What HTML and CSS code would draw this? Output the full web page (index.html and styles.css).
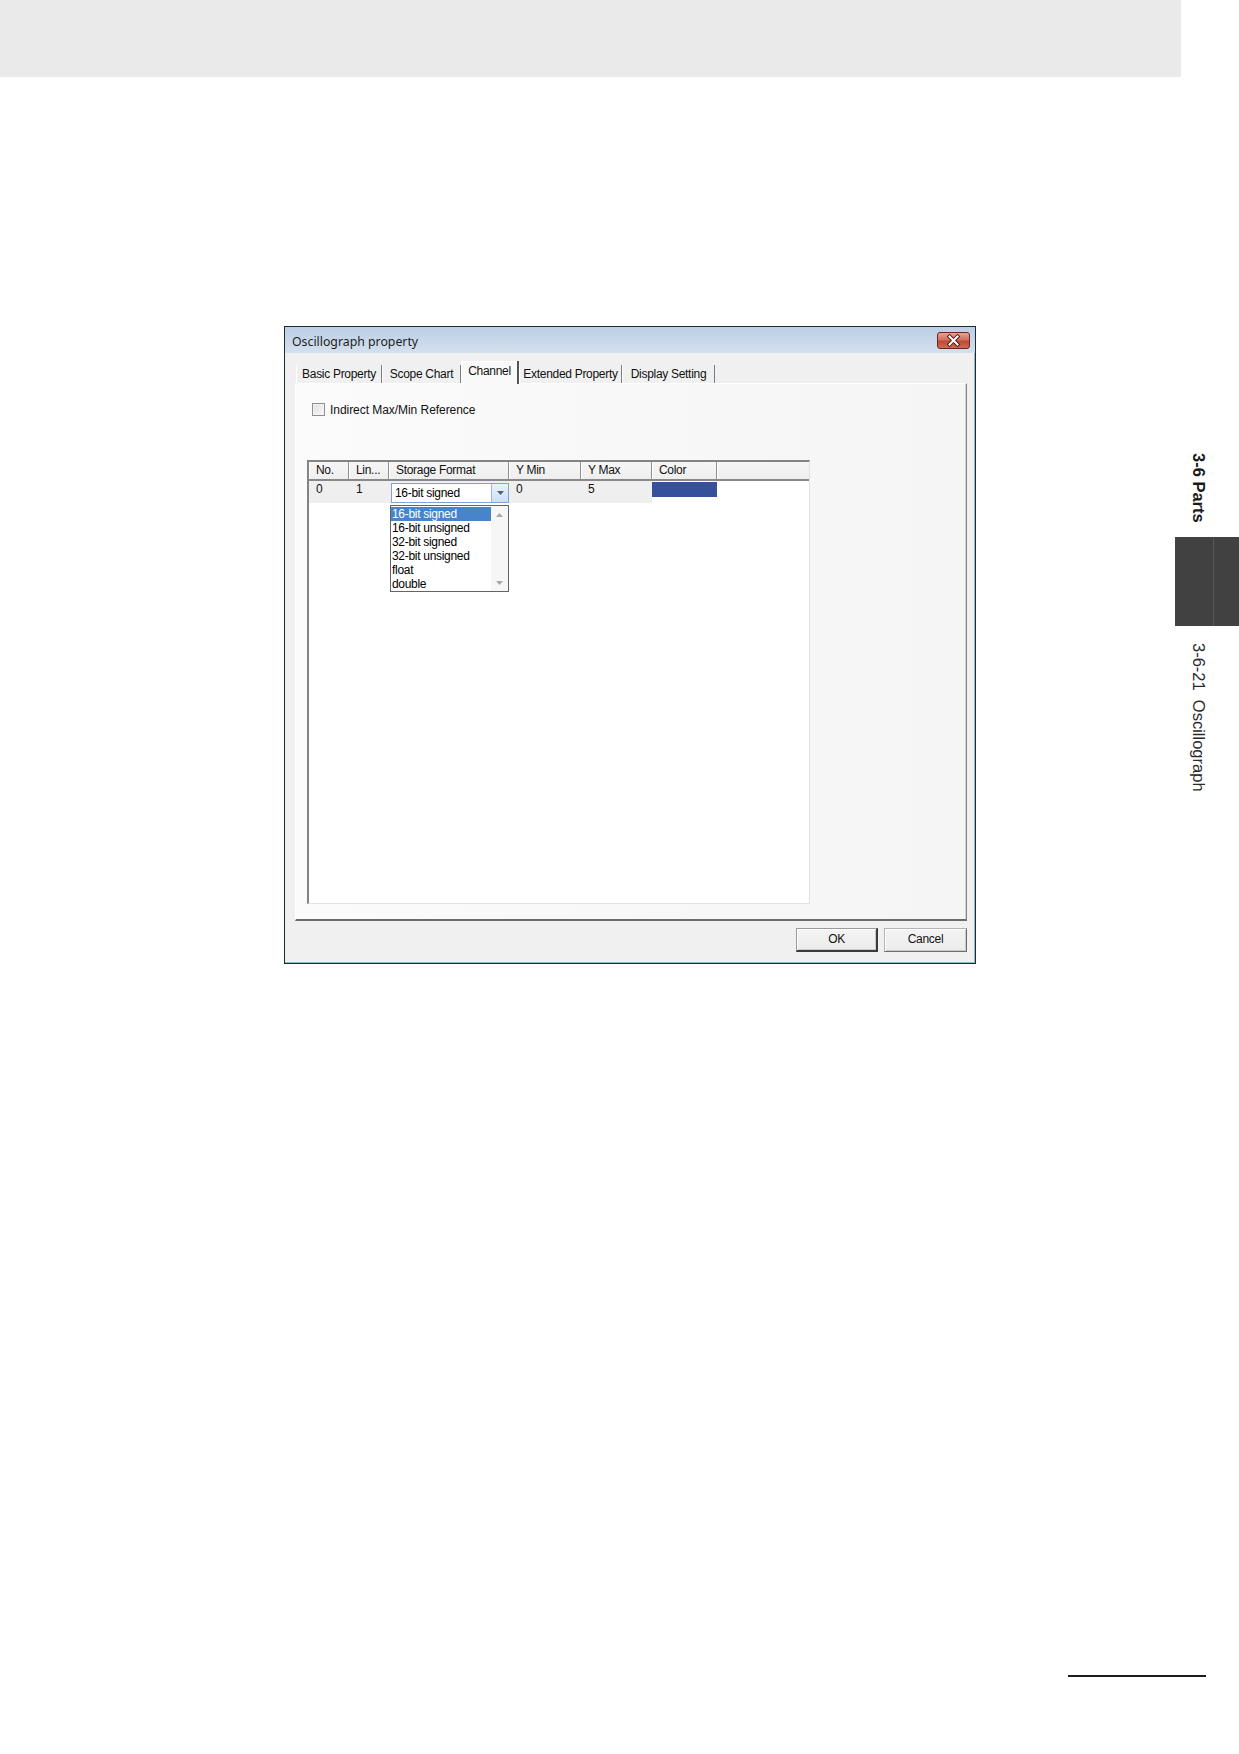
FILE: index.html
```html
<!DOCTYPE html>
<html lang="en">
<head>
<meta charset="utf-8">
<title>Oscillograph property</title>
<link rel="stylesheet" href="styles.css">
</head>
<body>
<div class="page">
  <div class="main">
    <div class="band"></div>

    <div class="dialog">
      <div class="titlebar">
        <span class="title">Oscillograph property</span>
        <span class="close">
          <svg width="33" height="17" viewBox="0 0 33 17" aria-hidden="true">
            <path d="M12.5 4.5 L20.5 12.5 M20.5 4.5 L12.5 12.5" stroke="#5a1a12" stroke-width="4" stroke-linecap="square" fill="none"/>
            <path d="M12.5 4.5 L20.5 12.5 M20.5 4.5 L12.5 12.5" stroke="#ffffff" stroke-width="2" stroke-linecap="square" fill="none"/>
          </svg>
        </span>
      </div>

      <div class="tabs">
        <div class="tab tab-basic">Basic Property</div>
        <div class="tab tab-scope">Scope Chart</div>
        <div class="tab tab-channel is-active">Channel</div>
        <div class="tab tab-ext">Extended Property</div>
        <div class="tab tab-display">Display Setting</div>
      </div>

      <div class="panel">
        <div class="check">
          <span class="check-box"></span>
          <span class="check-label">Indirect Max/Min Reference</span>
        </div>

        <div class="list">
          <div class="list-head">
            <div class="hcell">No.</div>
            <div class="hcell">Lin...</div>
            <div class="hcell">Storage Format</div>
            <div class="hcell">Y Min</div>
            <div class="hcell">Y Max</div>
            <div class="hcell">Color</div>
            <div class="hcell hcell-rest"></div>
          </div>
          <div class="list-row">
            <div class="cell">0</div>
            <div class="cell">1</div>
            <div class="cell cell-combo">
              <div class="combo">
                <span class="combo-text">16-bit signed</span>
                <span class="combo-btn">
                  <svg width="7" height="4" viewBox="0 0 7 4" aria-hidden="true"><path d="M0 0 H7 L3.5 4 Z" fill="#4f6079"/></svg>
                </span>
              </div>
              <div class="dropdown">
                <div class="options">
                  <div class="opt is-selected">16-bit signed</div>
                  <div class="opt">16-bit unsigned</div>
                  <div class="opt">32-bit signed</div>
                  <div class="opt">32-bit unsigned</div>
                  <div class="opt">float</div>
                  <div class="opt">double</div>
                </div>
                <div class="scroll">
                  <span class="scroll-arrow">
                    <svg width="7" height="4" viewBox="0 0 7 4" aria-hidden="true"><path d="M0 4 H7 L3.5 0 Z" fill="#a8a8a8"/></svg>
                  </span>
                  <span class="scroll-arrow">
                    <svg width="7" height="4" viewBox="0 0 7 4" aria-hidden="true"><path d="M0 0 H7 L3.5 4 Z" fill="#a8a8a8"/></svg>
                  </span>
                </div>
              </div>
            </div>
            <div class="cell">0</div>
            <div class="cell">5</div>
            <div class="cell cell-color"><span class="swatch"></span></div>
            <div class="cell cell-rest"></div>
          </div>
        </div>
      </div>

      <div class="buttons">
        <span class="btn btn-default">OK</span>
        <span class="btn">Cancel</span>
      </div>
    </div>
  </div>

  <aside class="thumb">
    <div class="thumb-section">3-6 Parts</div>
    <div class="thumb-block"></div>
    <div class="thumb-topic">3-6-21&nbsp;&nbsp;Oscillograph</div>
  </aside>
</div>
<div class="page-rule"></div>
</body>
</html>
```

FILE: styles.css
```css
html, body {
  margin: 0;
  padding: 0;
  background: #ffffff;
}

body {
  width: 1239px;
  height: 1754px;
  overflow: hidden;
  font-family: "Liberation Sans", Arial, sans-serif;
  color: #000;
}

/* ---------- page frame ---------- */
.page {
  display: grid;
  grid-template-columns: 1181px 58px;
  align-items: start;
}

.band {
  height: 77px;
  background: #eaeaea;
}

/* ---------- dialog window ---------- */
.dialog {
  box-sizing: border-box;
  width: 692px;
  height: 638px;
  margin: 249px 0 0 284px;
  border: 1px solid #1d2a30;
  background: #f0f0f0;
  box-shadow: inset -1px -1px 0 #8dbdd4;
  display: flex;
  flex-direction: column;
  font-size: 12px;
  letter-spacing: -0.3px;
}

.titlebar {
  height: 26px;
  flex: none;
  display: flex;
  justify-content: space-between;
  align-items: flex-start;
  background: linear-gradient(#bccfe6, #d4e0ee);
}

.title {
  padding: 7px 0 0 7px;
  font-family: "Noto Sans", "Open Sans", sans-serif;
  font-size: 12.3px;
  line-height: 15px;
  letter-spacing: 0;
  color: #1e1e1e;
}

.close {
  box-sizing: border-box;
  width: 33px;
  height: 17px;
  margin: 5px 5px 0 0;
  border: 1px solid #6e261c;
  border-radius: 3px;
  background: linear-gradient(#e3a595 0%, #d2705e 45%, #c14a36 55%, #cf6a52 100%);
  display: flex;
  align-items: center;
  justify-content: center;
}

.close svg {
  display: block;
  margin: -1px;
}

/* ---------- tab strip ---------- */
.tabs {
  height: 30px;
  flex: none;
  display: flex;
  align-items: flex-end;
  padding-left: 11px;
}

.tab {
  box-sizing: border-box;
  height: 18px;
  padding-top: 2px;
  line-height: 15px;
  text-align: center;
  color: #111;
  border-left: 1px solid #ffffff;
  border-right: 1px solid #7d7d7d;
  white-space: nowrap;
}

.tab-basic { width: 86px; }
.tab-scope { width: 79px; }
.tab-channel { width: 58px; }
.tab-ext { width: 103px; }
.tab-display { width: 93px; }

.tab.is-active {
  height: 23px;
  padding-top: 2px;
  line-height: 17px;
  margin-bottom: -1px;
  background: #f9f9f9;
  border-right: 2px solid #555;
  box-shadow: inset 0 1px 0 #ffffff;
  position: relative;
  z-index: 1;
}

/* ---------- tab page ---------- */
.panel {
  box-sizing: border-box;
  height: 538px;
  margin: 0 8px 0 10px;
  flex: none;
  border-top: 1px solid #ffffff;
  border-left: 1px solid #ffffff;
  border-right: 1px solid #858585;
  border-bottom: 2px solid #6c6c6c;
  background: linear-gradient(90deg, #fbfbfb, #f5f5f5);
  box-shadow: inset -1px 0 0 #d2d2d2;
}

.check {
  display: flex;
  align-items: center;
  gap: 5px;
  height: 13px;
  margin: 19px 0 0 16px;
}

.check-box {
  box-sizing: border-box;
  width: 13px;
  height: 13px;
  border: 1px solid #8e8f8f;
  background: linear-gradient(135deg, #dedede, #fbfbfb);
  box-shadow: inset 0 0 0 1px #f4f4f4;
}

.check-label {
  padding-top: 1px;
  line-height: 13px;
  letter-spacing: -0.05px;
  color: #111;
}

/* ---------- list view ---------- */
.list {
  box-sizing: border-box;
  width: 503px;
  height: 444px;
  margin: 44px 0 0 11px;
  border-top: 2px solid #838383;
  border-left: 2px solid #838383;
  border-right: 1px solid #e2e2e2;
  border-bottom: 1px solid #e2e2e2;
  background: #ffffff;
}

.list-head,
.list-row {
  display: grid;
  grid-template-columns: 40px 40px 120px 72px 71px 65px 1fr;
}

.list-head {
  height: 19px;
  box-sizing: border-box;
  border-bottom: 2px solid #888888;
  background: linear-gradient(#f6f6f6, #eeeeee);
}

.hcell {
  padding-left: 7px;
  line-height: 17px;
  color: #111;
  white-space: nowrap;
  overflow: hidden;
  box-shadow: inset -1px 0 0 #8f8f8f, inset 1px 0 0 #ffffff;
}

.hcell-rest {
  box-shadow: inset 1px 0 0 #ffffff;
}

.list-row {
  height: 16px;
}

.cell {
  padding-left: 7px;
  line-height: 16px;
  background: #efefef;
  color: #111;
}

.cell-combo {
  padding: 0;
  position: relative;
}

.cell-color,
.cell-rest {
  padding: 0;
  background: #ffffff;
}

.swatch {
  display: block;
  height: 15px;
  margin-top: 1px;
  background: #36509c;
}

/* in-place combo editor */
.combo {
  box-sizing: border-box;
  width: 118px;
  height: 20px;
  margin: 2px 0 0 2px;
  border: 1px solid #7ea3d6;
  background: #ffffff;
  display: flex;
  align-items: stretch;
  position: relative;
  z-index: 2;
}

.combo-text {
  flex: 1;
  padding-left: 3px;
  line-height: 18px;
  color: #000;
}

.combo-btn {
  width: 16px;
  border-left: 1px solid #98b9e2;
  background: linear-gradient(#eaf3fc, #c9e1f6);
  display: flex;
  align-items: center;
  justify-content: center;
}

.combo-btn svg { display: block; }

/* open drop-down list of the combo */
.dropdown {
  position: absolute;
  top: 24px;
  left: 1px;
  z-index: 3;
  box-sizing: border-box;
  width: 119px;
  height: 87px;
  border: 1px solid #646464;
  background: #ffffff;
  display: flex;
  overflow: hidden;
}

.options {
  flex: 1;
  padding-top: 1px;
}

.opt {
  height: 14px;
  line-height: 14px;
  padding-left: 1px;
  color: #000;
  white-space: nowrap;
}

.opt.is-selected {
  background: #4784c9;
  color: #ffffff;
}

.scroll {
  width: 17px;
  background: #f6f6f6;
  display: flex;
  flex-direction: column;
  justify-content: space-between;
}

.scroll-arrow {
  height: 17px;
  display: flex;
  align-items: center;
  justify-content: center;
}

.scroll-arrow svg { display: block; }

/* ---------- dialog buttons ---------- */
.buttons {
  display: flex;
  justify-content: flex-end;
  gap: 6px;
  margin: 7px 8px 0 0;
}

.btn {
  box-sizing: border-box;
  width: 83px;
  height: 24px;
  line-height: 21px;
  text-align: center;
  color: #111;
  background: linear-gradient(#f4f4f4, #ececec);
  border-top: 1px solid #b4b4b4;
  border-left: 1px solid #b4b4b4;
  border-right: 1px solid #6d6d6d;
  border-bottom: 1px solid #6d6d6d;
  box-shadow: inset 1px 1px 0 #ffffff, inset -1px -1px 0 #c8c8c8;
}

.btn-default {
  width: 82px;
  border-top-color: #9a9a9a;
  border-left-color: #9a9a9a;
  border-right: 2px solid #3b3b3b;
  border-bottom: 2px solid #3b3b3b;
}

/* ---------- chapter thumb index ---------- */
.thumb {
  padding: 453px 0 0 8px;
  font-family: "Liberation Sans", Arial, sans-serif;
  font-size: 16.5px;
  color: #222;
}

.thumb-section,
.thumb-topic {
  writing-mode: vertical-rl;
  line-height: 20px;
  white-space: nowrap;
}

.thumb-section {
  font-weight: bold;
  color: #1a1a1a;
}

.thumb-block {
  width: 64px;
  height: 89px;
  margin: 14px 0 0 -14px;
  background: linear-gradient(90deg, #414141 0 38px, #575757 38px 39px, #414141 39px);
}

.thumb-topic {
  margin-top: 17px;
  color: #2a2a2a;
}

/* ---------- footer rule ---------- */
.page-rule {
  width: 138px;
  height: 2px;
  margin: 711px 0 0 1068px;
  background: #1c1c1c;
}
```
